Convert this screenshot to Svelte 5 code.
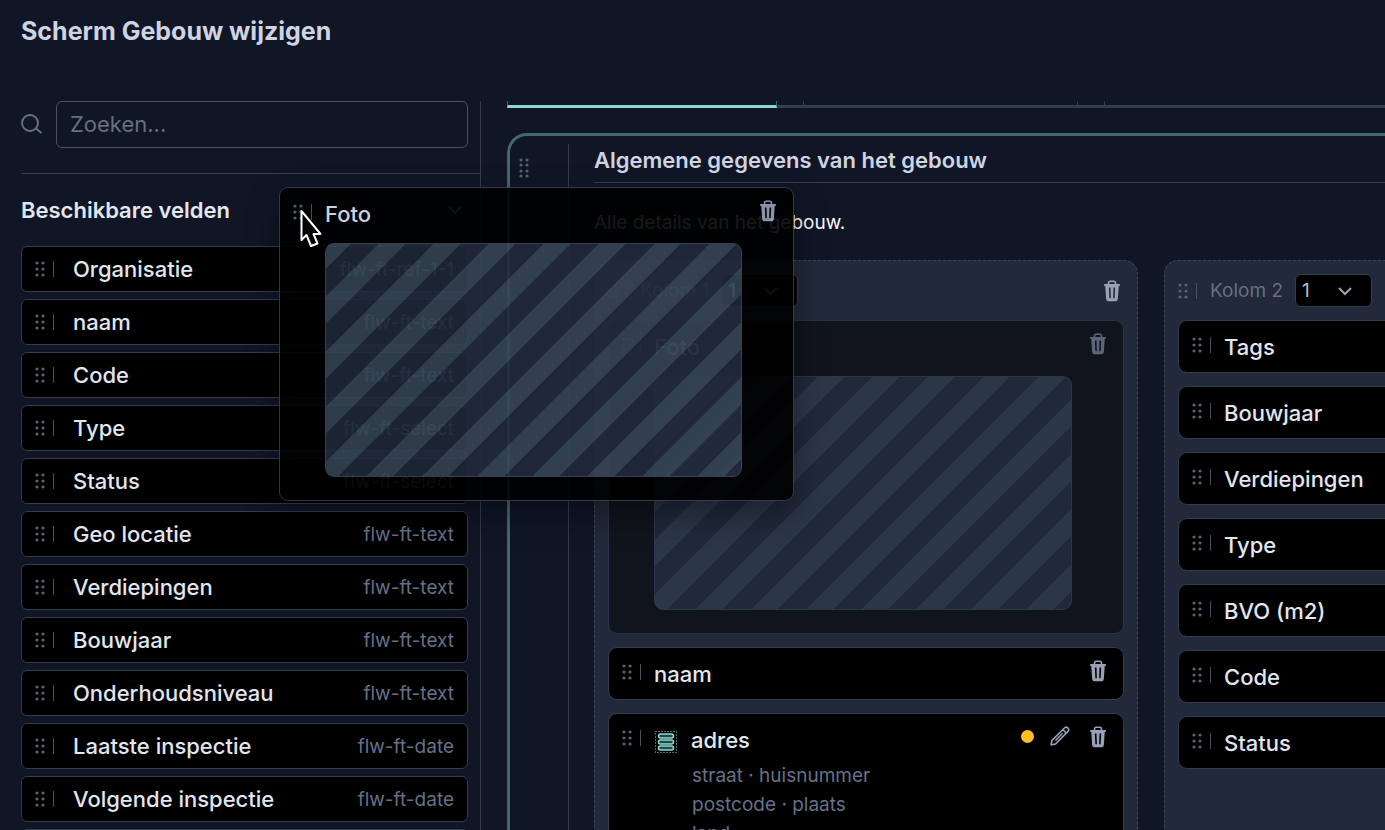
<script>
    let search = $state('');

    const fields = [
        { name: 'Organisatie', type: 'flw-ft-ref-1-1' },
        { name: 'naam', type: 'flw-ft-text' },
        { name: 'Code', type: 'flw-ft-text' },
        { name: 'Type', type: 'flw-ft-select' },
        { name: 'Status', type: 'flw-ft-select' },
        { name: 'Geo locatie', type: 'flw-ft-text' },
        { name: 'Verdiepingen', type: 'flw-ft-text' },
        { name: 'Bouwjaar', type: 'flw-ft-text' },
        { name: 'Onderhoudsniveau', type: 'flw-ft-text' },
        { name: 'Laatste inspectie', type: 'flw-ft-date' },
        { name: 'Volgende inspectie', type: 'flw-ft-date' },
        { name: '', type: '' }
    ];

    const secondColumn = ['Tags', 'Bouwjaar', 'Verdiepingen', 'Type', 'BVO (m2)', 'Code', 'Status'];

    let visible = $derived(fields.filter((f) => f.name.toLowerCase().includes(search.toLowerCase())));
</script>

{#snippet grip()}
    <span class="grip">
        <svg width="10" height="16" viewBox="0 0 10 16" aria-hidden="true">
            {#each [2, 8, 14] as y}
                <circle cx="2" cy={y} r="1.6" />
                <circle cx="8" cy={y} r="1.6" />
            {/each}
        </svg>
    </span>
{/snippet}

{#snippet chevron()}
    <svg class="chevron" width="16" height="10" viewBox="0 0 16 10" aria-hidden="true">
        <path d="M2 2l6 6 6-6" />
    </svg>
{/snippet}

{#snippet trash()}
    <button class="icon" aria-label="Verwijderen">
        <svg width="18" height="22" viewBox="0 0 18 22" aria-hidden="true">
            <path class="line thin" d="M5.500 4.500V3.200Q5.500 1.300 7.200 1.300h3.600q1.700 0 1.700 1.900v1.300" />
            <path class="line" d="M1.200 5h15.600" />
            <path class="fill" fill-rule="evenodd" d="M2.200 5h13.600l-.9 13.400q-.2 2.900-3 2.900H6.100q-2.800 0-3-2.900zM5.800 7.600l.6 10.600h1.500L7.500 7.600zM10.500 7.600l-.4 10.600h1.500l.6-10.600z" />
        </svg>
    </button>
{/snippet}

{#snippet photo()}
    <div class="card-head">
        {@render grip()}
        <h4>Foto</h4>
        {@render trash()}
    </div>
    <div class="stripes"></div>
{/snippet}

{#snippet columnHead(number, removable)}
    <div class="column-head">
        {@render grip()}
        <label for="span-{number}">Kolom {number}</label>
        <span class="select">
            <select id="span-{number}">
                <option>1</option>
                <option>2</option>
            </select>
            {@render chevron()}
        </span>
        {#if removable}
            {@render trash()}
        {/if}
    </div>
{/snippet}

<div class="page">
    <h1>Scherm Gebouw wijzigen</h1>

    <div class="body">
        <aside>
            <div class="search">
                <label for="search" aria-label="Zoeken">
                    <svg width="22" height="22" viewBox="0 0 22 22" aria-hidden="true">
                        <circle cx="9" cy="9" r="8" />
                        <path d="M15 14.500l5.500 4.500" />
                    </svg>
                </label>
                <input id="search" type="text" placeholder="Zoeken..." bind:value={search}>
            </div>
            <div class="available">
                <h2>Beschikbare velden</h2>
                {@render chevron()}
            </div>
            <ul>
                {#each visible as field}
                    <li>
                        {@render grip()}
                        <span class="name">{field.name}</span>
                        <span class="type">{field.type}</span>
                    </li>
                {/each}
            </ul>
        </aside>

        <main>
            <nav>
                <button class="tab active" aria-label="Tabblad 1"></button>
                <button class="tab" aria-label="Tabblad 2"></button>
                <button class="tab wide" aria-label="Tabblad 3"></button>
            </nav>

            <section>
                <div class="section-grip">
                    <svg width="10" height="20" viewBox="0 0 10 20" aria-hidden="true">
                        {#each [2, 7, 13, 18] as y}
                            <circle cx="2" cy={y} r="1.6" />
                            <circle cx="8" cy={y} r="1.6" />
                        {/each}
                    </svg>
                </div>
                <div class="content">
                    <h3>Algemene gegevens van het gebouw</h3>
                    <p class="intro">Alle details van het gebouw.</p>
                    <div class="columns">
                        <div class="column">
                            {@render columnHead(1, true)}
                            <article class="card ghost">
                                {@render photo()}
                            </article>
                            <article class="card">
                                <div class="card-head">
                                    {@render grip()}
                                    <h4>naam</h4>
                                    {@render trash()}
                                </div>
                            </article>
                            <article class="card">
                                <div class="card-head">
                                    {@render grip()}
                                    <svg class="group" width="24" height="24" viewBox="0 0 24 24" aria-hidden="true">
                                        <rect class="frame" x="1.5" y="1.5" width="21" height="21" />
                                        <rect x="4.5" y="4" width="15" height="4" rx="2" />
                                        <rect x="4.5" y="10" width="15" height="4" rx="2" />
                                        <rect x="4.5" y="16" width="15" height="4" rx="2" />
                                    </svg>
                                    <h4>adres</h4>
                                    <span class="dot"></span>
                                    <button class="icon" aria-label="Bewerken">
                                        <svg width="20" height="20" viewBox="0 0 20 20" aria-hidden="true">
                                            <path class="line thin" d="M1.200 18.800l.6-4.200L14.400 2q1.800-1.600 3.400-.1 1.700 1.700.2 3.500L5.500 18.100z" />
                                            <path class="line thin" d="M12.800 3.600l3.600 3.600M5.500 14.500l7.100-7.300" />
                                        </svg>
                                    </button>
                                    {@render trash()}
                                </div>
                                <div class="parts">
                                    <div>straat · huisnummer</div>
                                    <div>postcode · plaats</div>
                                    <div>land</div>
                                </div>
                            </article>
                        </div>
                        <div class="column">
                            {@render columnHead(2, false)}
                            {#each secondColumn as name}
                                <article class="card">
                                    <div class="card-head">
                                        {@render grip()}
                                        <h4>{name}</h4>
                                    </div>
                                </article>
                            {/each}
                        </div>
                    </div>
                </div>
            </section>
        </main>
    </div>

    <div class="card dragged">
        {@render photo()}
    </div>
    <svg class="cursor" width="24" height="40" viewBox="0 0 24 40" aria-hidden="true">
        <path d="M2.500 2v29l5-5L12 37l6.500-2.500L14.500 25h7z" />
    </svg>
</div>

<style>
    :global(body) {
        margin: 0;
        background: #101626;
    }

    * {
        box-sizing: border-box;
    }

    .page {
        position: relative;
        display: flex;
        flex-direction: column;
        height: 100vh;
        overflow: hidden;
        background: #101626;
        color: #e2e6ef;
        font-family: Inter, "Liberation Sans", sans-serif;
        font-size: 19px;
        line-height: 29px;
    }

    h1, h2, h3, h4, p, ul {
        margin: 0;
        padding: 0;
    }

    h1 {
        padding: 14px 21px 53px;
        font-size: 25px;
        font-weight: 700;
        line-height: 34px;
        color: #cfd4e3;
    }

    .body {
        display: flex;
        flex: 1;
        min-height: 0;
    }

    aside {
        flex: 0 0 460px;
        margin-left: 21px;
        border-right: 1px solid #343c4d;
        overflow: hidden;
    }

    .search {
        display: flex;
        align-items: center;
        gap: 13px;
        padding: 0 12px 25px 0;
        border-bottom: 1px solid #343c4d;
    }

    .search label {
        display: flex;
    }

    .search svg {
        fill: none;
        stroke: #66707f;
        stroke-width: 2;
    }

    .search input {
        flex: 1;
        height: 47px;
        padding: 0 13px 2px;
        border: 1px solid #4a5160;
        border-radius: 6px;
        background: transparent;
        color: #e2e6ef;
        font: inherit;
        font-size: 22px;
    }

    .search input::placeholder {
        color: #66707f;
        opacity: 1;
    }

    .available {
        display: flex;
        align-items: center;
        justify-content: space-between;
        height: 72px;
        padding-right: 17px;
    }

    h2, h3 {
        font-size: 22px;
        font-weight: 600;
    }

    .chevron {
        fill: none;
        stroke: #98a1b2;
        stroke-width: 2;
    }

    ul {
        display: flex;
        flex-direction: column;
        gap: 7px;
        padding-right: 12px;
        list-style: none;
    }

    li {
        display: flex;
        align-items: center;
        height: 46px;
        padding: 0 13px;
        border: 1px solid #343c4d;
        border-radius: 6px;
        background: #000;
    }

    .grip {
        display: flex;
        flex: none;
        align-items: center;
        width: 19px;
        height: 16px;
        border-right: 1px solid #4a5160;
    }

    .grip svg,
    .section-grip svg {
        fill: #5a6272;
    }

    .name {
        flex: 1;
        margin-left: 19px;
        font-size: 22px;
        font-weight: 500;
    }

    .type {
        color: #66708a;
    }

    main {
        flex: 1;
        min-width: 0;
        padding-left: 26px;
        overflow: hidden;
    }

    nav {
        display: flex;
        gap: 26px;
        width: 1200px;
        height: 7px;
        margin-bottom: 25px;
        box-shadow: inset 0 -3px #343c4d;
    }

    .tab {
        flex: 0 0 275px;
        padding: 0;
        border: 1px solid #343c4d;
        border-width: 0 1px 3px;
        background: transparent;
    }

    .tab.active {
        flex-basis: 270px;
        border-color: #42686d;
        border-bottom-color: #8fd9d3;
    }

    .tab.wide {
        flex: 1;
    }

    section {
        display: flex;
        width: 1200px;
        padding-top: 8px;
        border: 3px solid #42686d;
        border-radius: 20px;
    }

    .section-grip {
        flex: 0 0 59px;
        padding: 13px 9px;
        border-right: 1px solid #343c4d;
    }

    .content {
        flex: 1;
        margin-left: 25px;
    }

    h3 {
        padding: 2px 0 7px;
        border-bottom: 1px solid #343c4d;
        color: #cfd4e3;
    }

    .intro {
        padding: 25px 0 23px;
        color: #f8f9fc;
    }

    .columns {
        display: flex;
        gap: 26px;
    }

    .column {
        display: flex;
        flex: 0 0 544px;
        flex-direction: column;
        gap: 13px;
        padding: 13px;
        border: 1px dashed #3a4657;
        border-radius: 14px;
        background: #22293a;
    }

    .column-head {
        display: flex;
        align-items: center;
        height: 33px;
        padding-right: 3px;
    }

    .column-head label {
        margin: 0 12px 0 13px;
        color: #66707f;
    }

    .select {
        display: grid;
        align-items: center;
    }

    .select > * {
        grid-area: 1 / 1;
    }

    .select .chevron {
        justify-self: end;
        margin-right: 19px;
        pointer-events: none;
    }

    select {
        width: 77px;
        height: 33px;
        padding: 0 6px;
        border: 1px solid #343c4d;
        border-radius: 6px;
        appearance: none;
        background: #000;
        color: #b6bdcb;
        font: inherit;
    }

    .icon {
        display: flex;
        flex: none;
        margin-left: auto;
        padding: 0;
        border: 0;
        background: transparent;
        color: #98a1b8;
        cursor: pointer;
    }

    .icon .line {
        fill: none;
        stroke: currentColor;
        stroke-width: 2;
    }

    .icon .thin {
        stroke-width: 1.6;
    }

    .icon .fill {
        fill: currentColor;
    }

    .card {
        padding: 12px 13px 10px;
        border: 1px solid #343c4d;
        border-radius: 9px;
        background: #000;
    }

    .card-head {
        display: flex;
        gap: 13px;
        min-height: 29px;
        padding-right: 3px;
    }

    .card-head .grip {
        margin-top: 4px;
    }

    .card-head .icon {
        align-self: flex-start;
    }

    h4 {
        font-size: 22px;
        font-weight: 500;
    }

    .ghost {
        opacity: 0.5;
    }

    .stripes {
        height: 234px;
        margin: 14px 38px 13px 32px;
        border: 1px solid #3a4657;
        border-radius: 9px;
        background: repeating-linear-gradient(135deg, #354454 0 17px, #20283a 17px 37px, #354454 37px 39px);
    }

    .group {
        flex: none;
        margin-top: 4px;
        fill: #1d4a48;
        stroke: #8fd9d3;
        stroke-width: 1.5;
    }

    .group .frame {
        fill: none;
        stroke-width: 1;
        stroke-dasharray: 1 2;
    }

    .dot {
        width: 13px;
        height: 13px;
        margin: 4px 3px 0 auto;
        border-radius: 50%;
        background: #fbbf24;
    }

    .dot ~ .icon {
        margin-left: 0;
    }

    .dot ~ .icon + .icon {
        margin-left: 6px;
    }

    .parts {
        padding: 6px 0 6px 70px;
        color: #66708a;
    }

    .dragged {
        position: absolute;
        top: 187px;
        left: 279px;
        width: 515px;
        opacity: 0.9;
        box-shadow: 0 13px 32px rgba(0, 0, 0, 0.4);
    }

    .cursor {
        position: absolute;
        top: 209px;
        left: 299px;
        fill: #000;
        stroke: #fff;
        stroke-width: 2;
        stroke-linejoin: round;
    }
</style>
